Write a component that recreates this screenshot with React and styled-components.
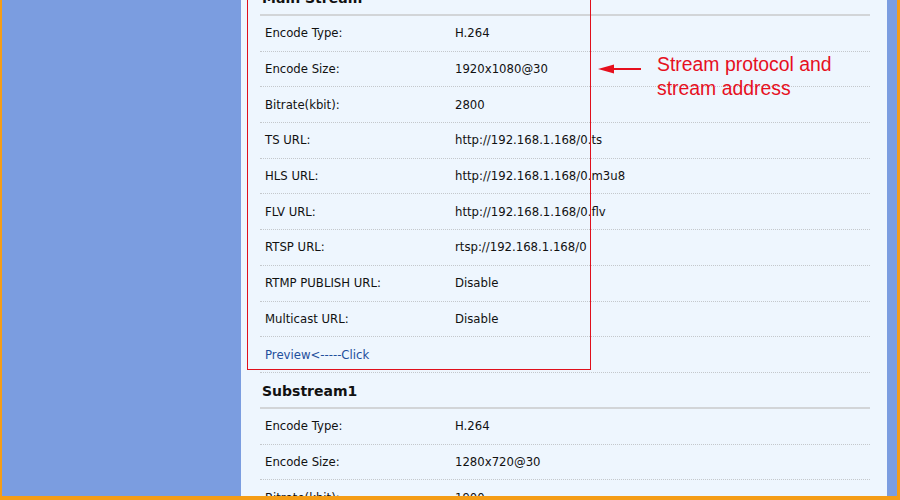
import React from "react";
import styled, { createGlobalStyle } from "styled-components";

const GlobalStyle = createGlobalStyle`
  html, body { margin: 0; padding: 0; }
  body { font-family: "DejaVu Sans", Verdana, sans-serif; }
`;

const Frame = styled.div`
  width: 900px;
  height: 500px;
  box-sizing: border-box;
  display: flex;
  overflow: hidden;
  background: #7b9de0;
  border-left: 2px solid #f59d16;
  border-right: 3px solid #f59d16;
  border-bottom: 4px solid #f59d16;
`;

const SideGap = styled.div`
  flex: none;
  width: 239px;
`;

const Panel = styled.div`
  position: relative;
  flex: none;
  width: 646px;
  box-sizing: border-box;
  padding: 0 17px 0 19px;
  background: #eef6fe;
`;

const Content = styled.div`
  margin-top: -20px;
`;

const Heading = styled.div`
  display: flex;
  align-items: center;
  padding-left: 2px;
  padding-top: 2px;
  box-sizing: border-box;
  height: 36px;
  border-bottom: 2px solid #d2d5d8;
  font-weight: bold;
  font-size: 14px;
  color: #111;
`;

const Row = styled.div`
  display: flex;
  align-items: center;
  height: 35.7px;
  box-sizing: border-box;
  border-bottom: 1px dotted #c4c8cc;
  padding-left: 5px;
  font-size: 11.7px;
  color: #111;
`;

const Label = styled.span`
  flex: none;
  width: 190px;
`;

const Value = styled.span``;

const Link = styled.a`
  color: #1f4f9c;
  text-decoration: none;
  font-size: 11.7px;
`;

const RedBox = styled.div`
  position: absolute;
  left: 6px;
  top: -5px;
  width: 344px;
  height: 375px;
  box-sizing: border-box;
  border: 1px solid #e0101c;
  pointer-events: none;
`;

const Arrow = styled.svg`
  position: absolute;
  left: 356px;
  top: 62px;
`;

const Note = styled.div`
  position: absolute;
  left: 416px;
  top: 52px;
  font-family: "Liberation Sans", Arial, sans-serif;
  font-size: 19.4px;
  line-height: 24px;
  color: #e6101e;
  white-space: nowrap;
`;

const mainRows = [
  ["Encode Type:", "H.264"],
  ["Encode Size:", "1920x1080@30"],
  ["Bitrate(kbit):", "2800"],
  ["TS URL:", "http://192.168.1.168/0.ts"],
  ["HLS URL:", "http://192.168.1.168/0.m3u8"],
  ["FLV URL:", "http://192.168.1.168/0.flv"],
  ["RTSP URL:", "rtsp://192.168.1.168/0"],
  ["RTMP PUBLISH URL:", "Disable"],
  ["Multicast URL:", "Disable"],
];

const subRows = [
  ["Encode Type:", "H.264"],
  ["Encode Size:", "1280x720@30"],
  ["Bitrate(kbit):", "1900"],
];

function Section({ title, rows, preview }) {
  return (
    <>
      <Heading>{title}</Heading>
      {rows.map(([l, v]) => (
        <Row key={l}>
          <Label>{l}</Label>
          <Value>{v}</Value>
        </Row>
      ))}
      {preview && (
        <Row>
          <Link href="#">Preview&lt;-----Click</Link>
        </Row>
      )}
    </>
  );
}

export default function App() {
  return (
    <>
      <GlobalStyle />
      <Frame>
        <SideGap />
        <Panel>
          <Content>
            <Section title="Main Stream" rows={mainRows} preview />
            <Section title="Substream1" rows={subRows} />
          </Content>
          <RedBox />
          <Arrow width="46" height="14" viewBox="0 0 46 14">
            <line x1="12" y1="7" x2="44" y2="7" stroke="#e6101e" strokeWidth="2" />
            <polygon points="1,7 17,2.5 17,11.5" fill="#e6101e" />
          </Arrow>
          <Note>
            Stream protocol and
            <br />
            stream address
          </Note>
        </Panel>
      </Frame>
    </>
  );
}
